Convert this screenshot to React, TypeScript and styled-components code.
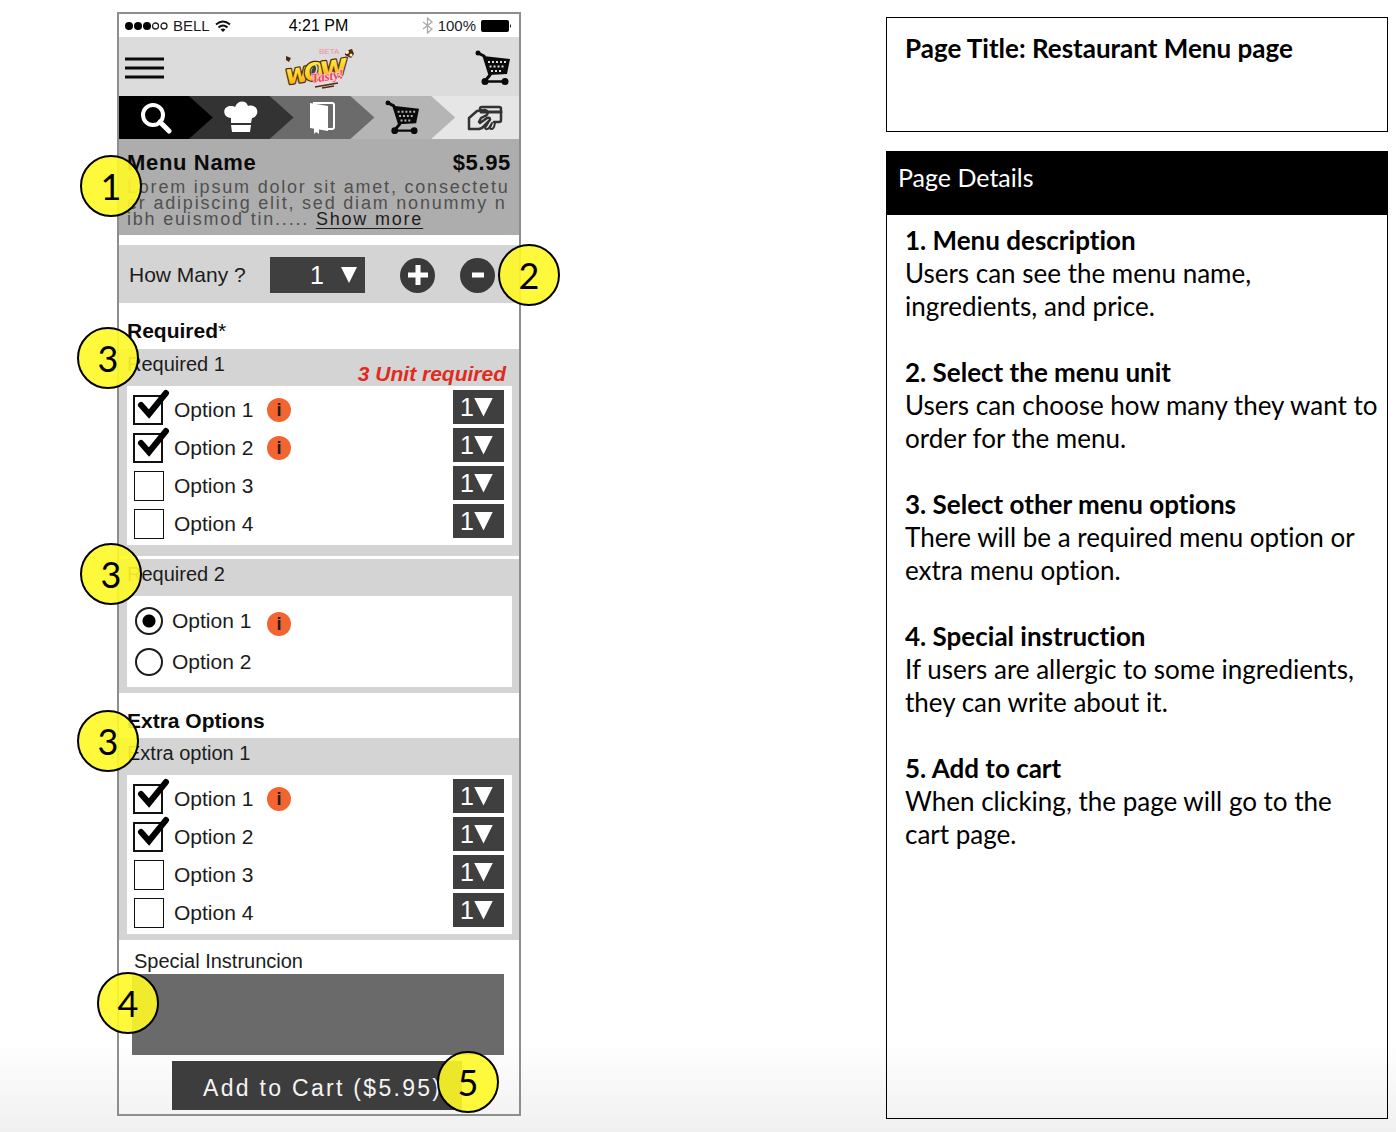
import React from "react";
import styled, { createGlobalStyle } from "styled-components";

const GlobalStyle = createGlobalStyle`
  * { box-sizing: border-box; }
  body { margin: 0; background: #fff; color: #000; }
  h1, h2, h3, p { margin: 0; font-weight: normal; }
  button, select, textarea, input { font: inherit; margin: 0; border-radius: 0; }
`;

const Page = styled.div`
  min-height: 100vh;
  display: flex;
  justify-content: space-between;
  align-items: flex-start;
  gap: 32px;
  padding: 12px 8px 13px 117px;
  background: linear-gradient(to bottom, #fff calc(100% - 90px), #f0f0f0 100%);
`;

const Phone = styled.main`
  flex: 0 0 404px;
  border: 2px solid #8e8e8e;
  padding-bottom: 4px;
  font-family: "Liberation Sans", Arial, sans-serif;
  font-size: 20px;
  line-height: 24px;
  color: #1c1c1c;
`;

const Badge = styled.span<{ $x: number; $y: number }>`
  position: absolute;
  left: ${(p) => p.$x}px;
  top: ${(p) => p.$y}px;
  z-index: 5;
  width: 62px;
  height: 62px;
  display: flex;
  align-items: center;
  justify-content: center;
  border: 2px solid #000;
  border-radius: 50%;
  background: rgba(255, 248, 40, 0.91);
  color: #000;
  font-family: Lato, sans-serif;
  font-size: 36px;
  line-height: 40px;
`;

const StatusBar = styled.div`
  display: grid;
  grid-template-columns: 1fr auto 1fr;
  align-items: center;
  height: 23px;
  padding: 0 7px 0 6px;
  font-size: 15px;
  line-height: 20px;
`;

const StatusGroup = styled.div<{ $end?: boolean }>`
  display: flex;
  align-items: center;
  gap: 5px;
  justify-content: ${(p) => (p.$end ? "flex-end" : "flex-start")};
`;

const Time = styled.span`
  font-size: 16px;
  color: #000;
`;

const Header = styled.header`
  display: grid;
  grid-template-columns: 1fr auto 1fr;
  align-items: center;
  height: 59px;
  padding: 3px 8px 0 6px;
  background: #dcdcdc;
`;

const IconButton = styled.button<{ $end?: boolean }>`
  display: flex;
  padding: 0;
  border: 0;
  background: none;
  justify-self: ${(p) => (p.$end ? "end" : "start")};
`;

const Steps = styled.nav`
  display: flex;
  height: 43px;
  background: #e6e6e6;
`;

const Step = styled.a<{ $grow: number; $color: string; $layer: number; $last?: boolean }>`
  flex: ${(p) => p.$grow} 1 0;
  position: relative;
  z-index: ${(p) => p.$layer};
  display: flex;
  align-items: center;
  justify-content: center;
  background: ${(p) => p.$color};
  clip-path: ${(p) =>
    p.$last ? "none" : "polygon(0 0, calc(100% - 24px) 0, 100% 50%, calc(100% - 24px) 100%, 0 100%)"};
  &:first-child svg { margin-right: 20px; }
  &:last-child svg { margin-left: 20px; }
  & + & { margin-left: -24px; }
`;

const MenuInfo = styled.section`
  position: relative;
  height: 96px;
  padding: 11px 8px 0;
  background: #adadad;
`;

const MenuHead = styled.div`
  display: flex;
  justify-content: space-between;
  font-size: 22px;
  line-height: 26px;
  font-weight: bold;
  letter-spacing: 0.03em;
  color: #0a0a0a;
`;

const MenuName = styled.h1`
  font-size: inherit;
  font-weight: bold;
`;

const MenuText = styled.p`
  padding-top: 3px;
  font-size: 18px;
  line-height: 16px;
  letter-spacing: 0.1em;
  color: #505050;
  white-space: nowrap;
`;

const MoreLink = styled.a`
  color: #1c1c1c;
  text-decoration: underline;
  text-underline-offset: 3px;
`;

const Quantity = styled.section`
  position: relative;
  display: flex;
  align-items: center;
  height: 58px;
  margin-top: 10px;
  padding: 2px 24px 0 10px;
  background: #d4d4d4;
  font-size: 21px;
`;

const QuantityLabel = styled.label`
  flex: 1;
`;

const Picker = styled.span<{ $large?: boolean }>`
  display: grid;
  width: ${(p) => (p.$large ? 95 : 51)}px;
  height: ${(p) => (p.$large ? 36 : 34)}px;
  align-items: center;
  background: #3f3f3f;
  color: #fff;
  & > * { grid-area: 1 / 1; }
  select {
    width: 100%;
    height: 100%;
    appearance: none;
    border: 0;
    padding: 0 0 0 ${(p) => (p.$large ? 40 : 7)}px;
    background: transparent;
    color: #fff;
    font-size: 25px;
    line-height: 32px;
  }
`;

const Arrow = styled.span<{ $large?: boolean }>`
  justify-self: end;
  margin-right: ${(p) => (p.$large ? 8 : 11)}px;
  width: ${(p) => (p.$large ? 16 : 19)}px;
  height: ${(p) => (p.$large ? 16 : 19)}px;
  background: #fff;
  clip-path: polygon(0 0, 100% 0, 50% 100%);
  pointer-events: none;
`;

const RoundButtons = styled.div`
  display: flex;
  gap: 25px;
  padding-left: 35px;
`;

const RoundButton = styled.button`
  display: flex;
  align-items: center;
  justify-content: center;
  width: 35px;
  height: 35px;
  padding: 0;
  border: 0;
  border-radius: 50%;
  background: #3a3a3a;
`;

const SectionTitle = styled.h2<{ $tight?: boolean }>`
  display: flex;
  align-items: center;
  height: ${(p) => (p.$tight ? 45 : 46)}px;
  padding: 10px 8px 0;
  font-size: 21px;
  font-weight: bold;
  color: #0a0a0a;
`;

const Star = styled.span`
  font-weight: normal;
`;

const Group = styled.fieldset<{ $bottom: number; $split?: boolean }>`
  position: relative;
  min-width: 0;
  margin: ${(p) => (p.$split ? 3 : 0)}px 0 0;
  border: 0;
  padding: 0 7px ${(p) => p.$bottom}px 8px;
  background: #d4d4d4;
`;

const GroupHead = styled.div`
  display: flex;
  justify-content: space-between;
  height: 37px;
  padding: 3px 6px 0 0;
`;

const Warning = styled.strong`
  padding-top: 10px;
  font-size: 21px;
  font-style: italic;
  color: #e02b20;
`;

const Panel = styled.div<{ $radio?: boolean }>`
  display: flex;
  flex-direction: column;
  gap: ${(p) => (p.$radio ? 7 : 4)}px;
  padding: ${(p) => (p.$radio ? "8px 8px 8px" : "4px 8px 7px 6px")};
  background: #fff;
`;

const Row = styled.div`
  display: flex;
  align-items: center;
  height: 34px;
  font-size: 21px;
`;

const Choice = styled.label<{ $radio?: boolean }>`
  display: flex;
  align-items: center;
  min-width: ${(p) => (p.$radio ? 120 : 122)}px;
  gap: ${(p) => (p.$radio ? 9 : 10)}px;
  padding-top: ${(p) => (p.$radio ? 0 : 6)}px;
`;

const CheckCell = styled.span`
  display: grid;
  width: 31px;
  height: 30px;
  & > * { grid-area: 1 / 1; }
  input {
    appearance: none;
    width: 30px;
    height: 30px;
    margin-left: 1px;
    border: 1px solid #111;
    background: #fff;
  }
  input:checked { margin-left: 0; border: 2px solid #111; }
  svg { position: relative; overflow: visible; pointer-events: none; visibility: hidden; }
  input:checked + svg { visibility: visible; }
`;

const Radio = styled.input`
  appearance: none;
  width: 28px;
  height: 28px;
  border: 2px solid #1c1c1c;
  border-radius: 50%;
  &:checked { background: radial-gradient(circle, #000 0 6px, transparent 7px); }
`;

const InfoButton = styled.button`
  display: flex;
  align-items: center;
  justify-content: center;
  width: 24px;
  height: 24px;
  margin: 6px 0 0 12px;
  padding: 0;
  border: 0;
  border-radius: 50%;
  background: #f26531;
  color: #1c1c1c;
  font-size: 18px;
  font-weight: bold;
  line-height: 24px;
`;

const Spacer = styled.span`
  flex: 1;
`;

const Instruction = styled.section`
  position: relative;
  padding: 9px 15px 0 13px;
  label { display: block; height: 25px; padding-left: 2px; }
  textarea {
    display: block;
    width: 100%;
    height: 81px;
    border: 0;
    padding: 8px;
    resize: none;
    background: #6a6a6a;
    color: #fff;
  }
`;

const CartAction = styled.div`
  position: relative;
  padding: 6px 53px 0;
`;

const CartButton = styled.button`
  display: block;
  width: 290px;
  height: 49px;
  border: 0;
  padding: 4px 0 0 31px;
  background: #3d3d3d;
  color: #f4f4f4;
  font-size: 23px;
  line-height: 28px;
  letter-spacing: 0.1em;
  text-align: left;
  white-space: nowrap;
`;

const Notes = styled.aside`
  flex: 0 1 502px;
  display: flex;
  flex-direction: column;
  gap: 19px;
  padding-top: 5px;
  font-family: Lato, Carlito, sans-serif;
  font-size: 26px;
  line-height: 33px;
  font-variant-ligatures: none;
`;

const TitleBox = styled.section`
  min-height: 115px;
  padding: 14px 18px;
  border: 1px solid #000;
  font-weight: bold;
`;

const DetailsBox = styled.section`
  min-height: 968px;
  border: 1px solid #000;
`;

const DetailsHead = styled.h2`
  height: 63px;
  padding: 9px 11px;
  background: #000;
  color: #fff;
  font-size: 25px;
`;

const NoteList = styled.div`
  display: flex;
  flex-direction: column;
  gap: 33px;
  padding: 9px 4px 9px 18px;
`;

const NoteTitle = styled.h3`
  font-size: 26px;
  font-weight: bold;
`;

const CartIcon = ({ size, hole }: { size: number; hole: string }) => (
  <svg width={size} height={size} viewBox="0 0 36 36" fill="none" aria-hidden="true">
    <circle cx="3" cy="3" r="2.5" fill="#0a0a0a" />
    <path d="M3 3l6 3 6 19-5 6" stroke="#0a0a0a" strokeWidth="3" strokeLinejoin="round" />
    <path d="M8 6l27 3-3 15-18 1z" fill="#0a0a0a" />
    <path d="M13 12h19M14.500 16.500h16M16 21h12" stroke={hole} strokeWidth="2" strokeDasharray="2 2" />
    <path d="M9 31.500h22" stroke="#0a0a0a" strokeWidth="2.500" />
    <circle cx="10" cy="31.500" r="3.500" fill="#0a0a0a" />
    <circle cx="30" cy="31.500" r="3.500" fill="#0a0a0a" />
  </svg>
);

const Logo = () => (
  <svg width="78" height="44" viewBox="-5 0 78 44" role="img" aria-label="Wow Tasty beta">
    <defs>
      <linearGradient id="gold" x1="0" y1="0" x2="0" y2="1">
        <stop offset="0.350" stopColor="#ffe838" />
        <stop offset="1" stopColor="#f39a14" />
      </linearGradient>
    </defs>
    <text x="35" y="8" fontSize="8" fontFamily="Liberation Sans, sans-serif" fill="#ee8f9b">BETA</text>
    <g
      transform="rotate(-9 36 26)"
      fontFamily="DejaVu Sans, sans-serif"
      fontWeight="bold"
      fontStyle="italic"
      fill="url(#gold)"
      stroke="#54290b"
      strokeWidth="2.500"
      strokeLinejoin="round"
      paintOrder="stroke"
    >
      <text x="1" y="33" fontSize="27">w</text>
      <text x="20" y="33" fontSize="24">O</text>
      <text x="36" y="33" fontSize="31">w</text>
    </g>
    <ellipse cx="31" cy="24" rx="3" ry="6" transform="rotate(25 31 24)" fill="#4b4039" />
    <path d="M31 19c3 1 2 6 0 9" stroke="#d8d8d8" strokeWidth="1.500" fill="none" />
    <path d="M2 10l5 2-2 4-3-2z" fill="#54290b" />
    <path d="M61 5l7-2 2 5-3 4-6-3z" fill="#54290b" />
    <circle cx="63" cy="6" r="2" fill="#fff3cf" />
    <circle cx="67" cy="9" r="1.500" fill="#fff3cf" />
    <text
      x="28"
      y="37"
      transform="rotate(-9 28 37)"
      fontSize="13"
      fontWeight="bold"
      fontStyle="italic"
      fontFamily="Liberation Serif, serif"
      fill="#ec3f62"
      stroke="#ffd3da"
      strokeWidth="1.500"
      paintOrder="stroke"
    >
      Tasty!
    </text>
    <path d="M31 41l23-4M38 42l12-2" stroke="#54290b" strokeWidth="1.500" />
  </svg>
);

const SearchIcon = () => (
  <svg width="32" height="32" viewBox="0 0 32 32" fill="none" stroke="#fff" aria-hidden="true">
    <circle cx="13" cy="13" r="10" strokeWidth="4" />
    <path d="M20 20l9 9" strokeWidth="5" strokeLinecap="round" />
  </svg>
);

const ChefIcon = () => (
  <svg width="36" height="34" viewBox="0 0 36 34" fill="#fff" aria-hidden="true">
    <path d="M8 22v-5c-9-1-9-12 0-12 2 0 3 0 4 1 3-7 11-7 13-1 10-3 13 10 4 12l-1 5z" />
    <path d="M8 24h20l-1 7H9z" />
  </svg>
);

const BookIcon = () => (
  <svg width="28" height="34" viewBox="0 0 28 34" aria-hidden="true">
    <path d="M5 2h19q2 0 2 2v22q0 2-2 2h-5" fill="none" stroke="#fff" strokeWidth="2" />
    <path d="M2 2l18 3v25L2 27z" fill="#fff" />
    <path d="M6 27h5v6l-3-2-2 2z" fill="#fff" />
  </svg>
);

const PayIcon = () => (
  <svg width="36" height="26" viewBox="0 0 36 26" fill="none" stroke="#333" strokeWidth="2.5" strokeLinejoin="round" strokeLinecap="round" aria-hidden="true">
    <path d="M13 5V4q0-2 2-2h17q2 0 2 2v11q0 2-2 2h-5" />
    <path d="M14 7h20" strokeWidth="3" />
    <path d="M5 24H2V13l8-7 8-1c4 1 3 5 0 6l-4 2-2 4M13 18l7-5c3-1 4 1 2 3l-7 7-3 1H5" />
    <path d="M21 18l-3 5c1 2 3 1 4 0l3-5M25 18l-2 5c1 2 3 1 4-1l1-4" strokeWidth="2" />
  </svg>
);

const CheckMark = () => (
  <svg width="36" height="30" viewBox="0 0 36 30" aria-hidden="true">
    <path d="M8 10l8 9L33-2" fill="none" stroke="#000" strokeWidth="6" strokeLinecap="round" strokeLinejoin="miter" />
  </svg>
);

const NumberPicker = ({ id, label, large }: { id: string; label?: string; large?: boolean }) => (
  <Picker $large={large}>
    <select id={id} aria-label={label} defaultValue="1">
      <option>1</option>
      <option>2</option>
      <option>3</option>
    </select>
    <Arrow $large={large} />
  </Picker>
);

type Option = { name: string; checked?: boolean; info?: boolean };

const CheckOptions = ({ group, options }: { group: string; options: Option[] }) => (
  <Panel>
    {options.map((o) => (
      <Row key={o.name}>
        <Choice>
          <CheckCell>
            <input type="checkbox" defaultChecked={o.checked} />
            <CheckMark />
          </CheckCell>
          {o.name}
        </Choice>
        {o.info && <InfoButton type="button" aria-label={`About ${o.name}`}>i</InfoButton>}
        <Spacer />
        <NumberPicker id={`${group}-${o.name}`} label={`${o.name} quantity`} />
      </Row>
    ))}
  </Panel>
);

const requiredOptions: Option[] = [
  { name: "Option 1", checked: true, info: true },
  { name: "Option 2", checked: true, info: true },
  { name: "Option 3" },
  { name: "Option 4" },
];

const extraOptions: Option[] = [
  { name: "Option 1", checked: true, info: true },
  { name: "Option 2", checked: true },
  { name: "Option 3" },
  { name: "Option 4" },
];

const notes = [
  { title: "1. Menu description", lines: ["Users can see the menu name,", "ingredients, and price."] },
  { title: "2. Select the menu unit", lines: ["Users can choose how many they want to", "order for the menu."] },
  { title: "3. Select other menu options", lines: ["There will be a required menu option or", "extra menu option."] },
  { title: "4. Special instruction", lines: ["If users are allergic to some ingredients,", "they can write about it."] },
  { title: "5. Add to cart", lines: ["When clicking, the page will go to the", "cart page."] },
];

export default function App() {
  return (
    <Page>
      <GlobalStyle />
      <Phone>
        <StatusBar>
          <StatusGroup>
            <svg width="43" height="10" viewBox="0 0 43 10" aria-hidden="true">
              <circle cx="4" cy="5" r="4" />
              <circle cx="13" cy="5" r="4" />
              <circle cx="22" cy="5" r="4" />
              <circle cx="30.500" cy="5" r="3" fill="none" stroke="#222" strokeWidth="1.300" />
              <circle cx="39" cy="5" r="3" fill="none" stroke="#222" strokeWidth="1.300" />
            </svg>
            BELL
            <svg width="16" height="12" viewBox="0 0 16 12" fill="none" stroke="#111" strokeWidth="2" aria-hidden="true">
              <path d="M1 4.500q7-6 14 0M3.500 7.500q4.500-4 9 0" />
              <path d="M8 12L5.500 9.500q2.500-2 5 0z" fill="#111" stroke="none" />
            </svg>
          </StatusGroup>
          <Time>4:21 PM</Time>
          <StatusGroup $end>
            <svg width="11" height="17" viewBox="0 0 11 17" fill="none" stroke="#aaa" strokeWidth="1.300" aria-hidden="true">
              <path d="M1 5l9 7-4.500 4V1L10 5l-9 7" />
            </svg>
            100%
            <svg width="31" height="12" viewBox="0 0 31 12" aria-hidden="true">
              <rect width="28" height="12" rx="2" />
              <path d="M29 4q2 2 0 4z" />
            </svg>
          </StatusGroup>
        </StatusBar>

        <Header>
          <IconButton type="button" aria-label="Open menu">
            <svg width="39" height="24" viewBox="0 0 39 24" stroke="#0a0a0a" strokeWidth="3" aria-hidden="true">
              <path d="M0 3h39M0 12h39M0 21h39" />
            </svg>
          </IconButton>
          <Logo />
          <IconButton type="button" aria-label="Cart" $end>
            <CartIcon size={36} hole="#dcdcdc" />
          </IconButton>
        </Header>

        <Steps aria-label="Order steps">
          <Step href="#search" aria-label="Search" $grow={94} $color="#000" $layer={4}><SearchIcon /></Step>
          <Step href="#restaurant" aria-label="Restaurant" $grow={105} $color="#333" $layer={3}><ChefIcon /></Step>
          <Step href="#menu" aria-label="Menu" $grow={105} $color="#6b6b6b" $layer={2}><BookIcon /></Step>
          <Step href="#cart" aria-label="Cart" $grow={105} $color="#b5b5b5" $layer={1}><CartIcon size={35} hole="#b5b5b5" /></Step>
          <Step href="#pay" aria-label="Payment" $grow={88} $color="#e6e6e6" $layer={0} $last><PayIcon /></Step>
        </Steps>

        <MenuInfo>
          <Badge $x={-39} $y={16}>1</Badge>
          <MenuHead>
            <MenuName>Menu Name</MenuName>
            <span>$5.95</span>
          </MenuHead>
          <MenuText>
            Lorem ipsum dolor sit amet, consectetu
            <br />
            er adipiscing elit, sed diam nonummy n
            <br />
            ibh euismod tin..... <MoreLink href="#more">Show more</MoreLink>
          </MenuText>
        </MenuInfo>

        <Quantity>
          <Badge $x={379} $y={-1}>2</Badge>
          <QuantityLabel htmlFor="how-many">How Many ?</QuantityLabel>
          <NumberPicker id="how-many" large />
          <RoundButtons>
            <RoundButton type="button" aria-label="Increase">
              <svg width="20" height="20" stroke="#fff" strokeWidth="5" aria-hidden="true"><path d="M0 10h20M10 0v20" /></svg>
            </RoundButton>
            <RoundButton type="button" aria-label="Decrease">
              <svg width="12" height="20" stroke="#fff" strokeWidth="5" aria-hidden="true"><path d="M0 10h12" /></svg>
            </RoundButton>
          </RoundButtons>
        </Quantity>

        <SectionTitle>Required<Star>*</Star></SectionTitle>
        <Group $bottom={11} aria-label="Required 1">
          <Badge $x={-42} $y={-22}>3</Badge>
          <GroupHead>
            <span>Required 1</span>
            <Warning>3 Unit required</Warning>
          </GroupHead>
          <CheckOptions group="required" options={requiredOptions} />
        </Group>
        <Group $bottom={6} $split aria-label="Required 2">
          <Badge $x={-39} $y={-16}>3</Badge>
          <GroupHead>
            <span>Required 2</span>
          </GroupHead>
          <Panel $radio>
            <Row>
              <Choice $radio><Radio type="radio" name="required-2" defaultChecked />Option 1</Choice>
              <InfoButton type="button" aria-label="About Option 1">i</InfoButton>
            </Row>
            <Row>
              <Choice $radio><Radio type="radio" name="required-2" />Option 2</Choice>
            </Row>
          </Panel>
        </Group>

        <SectionTitle $tight>Extra Options</SectionTitle>
        <Group $bottom={6} aria-label="Extra option 1">
          <Badge $x={-42} $y={-28}>3</Badge>
          <GroupHead>
            <span>Extra option 1</span>
          </GroupHead>
          <CheckOptions group="extra" options={extraOptions} />
        </Group>

        <Instruction>
          <Badge $x={-22} $y={32}>4</Badge>
          <label htmlFor="instruction">Special Instruncion</label>
          <textarea id="instruction" />
        </Instruction>
        <CartAction>
          <Badge $x={318} $y={-4}>5</Badge>
          <CartButton type="button">Add to Cart ($5.95)</CartButton>
        </CartAction>
      </Phone>

      <Notes>
        <TitleBox>Page Title: Restaurant Menu page</TitleBox>
        <DetailsBox>
          <DetailsHead>Page Details</DetailsHead>
          <NoteList>
            {notes.map((n) => (
              <article key={n.title}>
                <NoteTitle>{n.title}</NoteTitle>
                <p>
                  {n.lines[0]}
                  <br />
                  {n.lines[1]}
                </p>
              </article>
            ))}
          </NoteList>
        </DetailsBox>
      </Notes>
    </Page>
  );
}
